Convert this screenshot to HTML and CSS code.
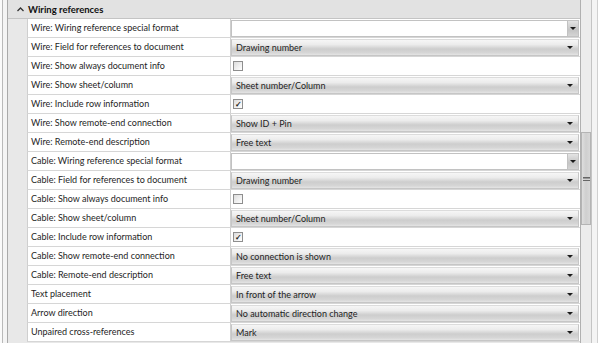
FILE: index.html
```html
<html lang="en">
<head>
    <meta charset="UTF-8">
    <title>Wiring references</title>
    <link rel="stylesheet" href="styles.css">
</head>
<body>
    <div class="frame">
        <div class="side"></div>
        <div class="panel">
            <div class="head">
                <svg class="caret" width="7" height="5" viewBox="0 0 7 5"><path d="M0.5 4 L3.5 1 L6.5 4" fill="none" stroke="#333" stroke-width="1.3"/></svg>
                <span class="title">Wiring references</span>
            </div>
            <div class="row"><div class="gutter"></div><div class="label">Wire: Wiring reference special format</div><div class="value"><div class="combo"><div class="field"></div><div class="btn"><i class="arrow"></i></div></div></div></div>
            <div class="row"><div class="gutter"></div><div class="label">Wire: Field for references to document</div><div class="value"><div class="drop">Drawing number<i class="arrow"></i></div></div></div>
            <div class="row"><div class="gutter"></div><div class="label">Wire: Show always document info</div><div class="value"><span class="check"></span></div></div>
            <div class="row"><div class="gutter"></div><div class="label">Wire: Show sheet/column</div><div class="value"><div class="drop">Sheet number/Column<i class="arrow"></i></div></div></div>
            <div class="row"><div class="gutter"></div><div class="label">Wire: Include row information</div><div class="value"><span class="check on">&#10003;</span></div></div>
            <div class="row"><div class="gutter"></div><div class="label">Wire: Show remote-end connection</div><div class="value"><div class="drop">Show ID + Pin<i class="arrow"></i></div></div></div>
            <div class="row"><div class="gutter"></div><div class="label">Wire: Remote-end description</div><div class="value"><div class="drop">Free text<i class="arrow"></i></div></div></div>
            <div class="row"><div class="gutter"></div><div class="label">Cable: Wiring reference special format</div><div class="value"><div class="combo"><div class="field"></div><div class="btn"><i class="arrow"></i></div></div></div></div>
            <div class="row"><div class="gutter"></div><div class="label">Cable: Field for references to document</div><div class="value"><div class="drop">Drawing number<i class="arrow"></i></div></div></div>
            <div class="row"><div class="gutter"></div><div class="label">Cable: Show always document info</div><div class="value"><span class="check"></span></div></div>
            <div class="row"><div class="gutter"></div><div class="label">Cable: Show sheet/column</div><div class="value"><div class="drop">Sheet number/Column<i class="arrow"></i></div></div></div>
            <div class="row"><div class="gutter"></div><div class="label">Cable: Include row information</div><div class="value"><span class="check on">&#10003;</span></div></div>
            <div class="row"><div class="gutter"></div><div class="label">Cable: Show remote-end connection</div><div class="value"><div class="drop">No connection is shown<i class="arrow"></i></div></div></div>
            <div class="row"><div class="gutter"></div><div class="label">Cable: Remote-end description</div><div class="value"><div class="drop">Free text<i class="arrow"></i></div></div></div>
            <div class="row"><div class="gutter"></div><div class="label">Text placement</div><div class="value"><div class="drop">In front of the arrow<i class="arrow"></i></div></div></div>
            <div class="row"><div class="gutter"></div><div class="label">Arrow direction</div><div class="value"><div class="drop">No automatic direction change<i class="arrow"></i></div></div></div>
            <div class="row"><div class="gutter"></div><div class="label">Unpaired cross-references</div><div class="value"><div class="drop">Mark<i class="arrow"></i></div></div></div>
        </div>
        <div class="scroll">
            <div class="track"><div class="thumb"><span class="grip"></span></div></div>
            <div class="edge"></div>
        </div>
    </div>
</body>
</html>
```
FILE: styles.css
```css
*{
    margin: 0; padding: 0;
    box-sizing: border-box;
}
body{
    width: 598px;
    height: 343px;
    overflow: hidden;
    background: #f0f0f0;
    font-family: Lato, "Liberation Sans", sans-serif;
    font-size: 9px;
    color: #1e1e1e;
}
.frame{
    display: flex;
    height: 343px;
}
.side{
    width: 8px;
    background: #f4f4f4;
    border-left: 2px solid #fafafa;
    box-shadow: inset 1px 0 0 #b9b9b9, inset -1px 0 0 #a9a9a9;
}
.panel{
    width: 573px;
    border-right: 1px solid #b0b0b0;
    background: #e8e8e8;
}
.head{
    height: 19px;
    display: flex;
    align-items: center;
    background: #e2e2e2;
    border-bottom: 1px solid #c4c4c4;
}
.caret{
    margin: 0 4px 0 9px;
}
.title{
    font-weight: bold;
    font-size: 9.5px;
    color: #111;
}
.row{
    display: flex;
    height: 19px;
}
.gutter{
    width: 19px;
    background: #e8e8e8;
}
.label{
    width: 203px;
    background: #fff;
    border-left: 1px solid #cfcfcf;
    border-bottom: 1px solid #d6d6d6;
    padding-left: 3px;
    line-height: 18px;
    white-space: nowrap;
    overflow: hidden;
}
.value{
    flex: 1;
    background: #fff;
    border-left: 1px solid #cfcfcf;
    border-bottom: 1px solid #d6d6d6;
    padding: 1px 1px 0 0;
    display: flex;
    align-items: flex-start;
}
.drop{
    position: relative;
    width: 100%;
    height: 17px;
    line-height: 15px;
    padding-left: 4px;
    border: 1px solid #c6c6c6;
    border-top-color: #dcdcdc;
    background: linear-gradient(#f6f6f6 0%, #ececec 30%, #cdcdcd 60%, #d6d6d6 85%, #e4e4e4 100%);
    white-space: nowrap;
}
.arrow{
    position: absolute;
    right: 5px;
    top: 6px;
    width: 0;
    height: 0;
    border-left: 3px solid transparent;
    border-right: 3px solid transparent;
    border-top: 3px solid #1a1a1a;
}
.combo{
    display: flex;
    width: 100%;
    height: 17px;
}
.field{
    flex: 1;
    border: 1px solid #c2c2c2;
    background: #fff;
}
.btn{
    position: relative;
    width: 11px;
    border: 1px solid #c2c2c2;
    border-left: none;
    background: linear-gradient(#e4e4e4, #c4c4c4 60%, #d4d4d4);
}
.btn .arrow{
    right: 2px;
}
.check{
    display: inline-block;
    width: 10px;
    height: 10px;
    margin: 3px 0 0 2px;
    border: 1px solid #8e8e8e;
    background: linear-gradient(135deg, #dcdcdc, #ffffff);
    font-size: 8px;
    line-height: 8px;
    text-align: center;
    font-weight: bold;
    color: #222;
}
.scroll{
    width: 17px;
    display: flex;
}
.track{
    width: 11px;
    background: #ececec;
    border-right: 1px solid #c4c4c4;
    padding-top: 132px;
}
.thumb{
    height: 93px;
    background: linear-gradient(90deg, #dedede, #cfcfcf 50%, #d8d8d8);
    border: 1px solid #b4b4b4;
    display: flex;
    align-items: center;
    justify-content: center;
}
.grip{
    width: 7px;
    height: 4px;
    border-top: 1px solid #666;
    border-bottom: 1px solid #666;
    box-shadow: inset 0 1px 0 #999;
}
.edge{
    flex: 1;
    background: #f4f4f4;
    border-right: 1px solid #d0d0d0;
}
```
